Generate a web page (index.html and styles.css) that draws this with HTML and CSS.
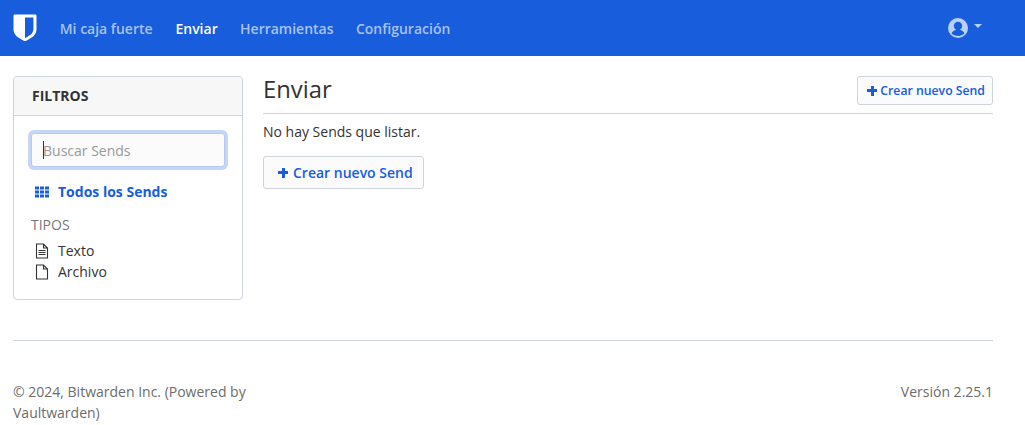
FILE: index.html
```html
<!DOCTYPE html>
<html lang="es">
<head>
    <meta charset="UTF-8">
    <title>Bitwarden Web Vault</title>
    <link rel="stylesheet" href="styles.css">
</head>
<body>

    <nav class="navbar">
        <svg class="logo" viewBox="0 0 24 28" aria-hidden="true">
            <path fill="#fff" d="M23.2 0.9C23 0.7 22.7 0.5 22.4 0.5H1.6C1.3 0.5 1 0.7 0.8 0.9 0.6 1.1 0.5 1.4 0.5 1.7V15.4C0.5 16.5 0.7 17.5 1.1 18.5 1.5 19.5 2.1 20.4 2.8 21.2 3.4 22 4.2 22.7 5 23.3 5.8 23.9 6.6 24.4 7.4 24.8 8.2 25.3 8.9 25.7 9.5 26 10.1 26.3 10.5 26.5 10.9 26.7L11.5 26.9C11.7 27 11.9 27 12 27 12.1 27 12.3 27 12.5 26.9L13.1 26.7C13.5 26.5 13.9 26.3 14.5 26 15.1 25.7 15.8 25.3 16.6 24.8 17.4 24.4 18.2 23.9 19 23.3 19.8 22.7 20.6 22 21.2 21.2 21.9 20.4 22.5 19.5 22.9 18.5 23.3 17.5 23.5 16.5 23.5 15.4V1.7C23.5 1.4 23.4 1.1 23.2 0.9Z"/>
            <path fill="#175ddc" d="M20.4 3.5V15.3C20.4 16.2 20.2 17 19.8 17.8 19.4 18.6 18.9 19.3 18.3 19.9 17.7 20.5 17 21.1 16.2 21.6 15.5 22.1 14.8 22.5 14.2 22.9 13.5 23.2 12.9 23.5 12.4 23.7L12 23.9V3.5Z"/>
        </svg>
        <a class="nav-link" href="#">Mi caja fuerte</a>
        <a class="nav-link active" href="#">Enviar</a>
        <a class="nav-link" href="#">Herramientas</a>
        <a class="nav-link" href="#">Configuración</a>
        <a class="account" href="#">
            <svg class="avatar" viewBox="0 0 20 20" aria-hidden="true">
                <circle cx="10" cy="10" r="10" fill="#bcd0f3"/>
                <circle cx="10" cy="8" r="4.2" fill="#175ddc"/>
                <path fill="#175ddc" d="M3.6 15.6C4.4 13.2 6.4 12 8 12h4c1.6 0 3.6 1.2 4.4 3.6C14.8 17.2 12.6 18 10 18S5.2 17.2 3.6 15.6Z"/>
            </svg>
            <span class="caret"></span>
        </a>
    </nav>

    <div class="container">
        <div class="content">
            <aside class="card">
                <div class="card-header">FILTROS</div>
                <div class="card-body">
                    <div class="search">
                        <input class="search-input" type="text" placeholder="Buscar Sends">
                        <span class="text-caret"></span>
                    </div>
                    <a class="filter filter-all" href="#">
                        <svg class="filter-icon" viewBox="0 0 14 12" aria-hidden="true">
                            <path fill="#175ddc" d="M0 0.5h4v3H0zM5 0.5h4v3H5zM10 0.5h4v3h-4zM0 4.5h4v3H0zM5 4.5h4v3H5zM10 4.5h4v3h-4zM0 8.5h4v3H0zM5 8.5h4v3H5zM10 8.5h4v3h-4z"/>
                        </svg>
                        Todos los Sends
                    </a>
                    <h3 class="filter-title">TIPOS</h3>
                    <ul class="filter-list">
                        <li>
                            <a class="filter" href="#">
                                <svg class="filter-icon" viewBox="0 0 14 16" aria-hidden="true">
                                    <path fill="none" stroke="#333" stroke-width="1.1" d="M1.5 1h7l4 4v10h-11zM8.5 1v4h4"/>
                                    <path fill="none" stroke="#333" d="M3.5 7.5h7M3.5 9.5h7M3.5 11.5h7"/>
                                </svg>
                                Texto
                            </a>
                        </li>
                        <li>
                            <a class="filter" href="#">
                                <svg class="filter-icon" viewBox="0 0 14 16" aria-hidden="true">
                                    <path fill="none" stroke="#333" stroke-width="1.1" d="M1.5 1h7l4 4v10h-11zM8.5 1v4h4"/>
                                </svg>
                                Archivo
                            </a>
                        </li>
                    </ul>
                </div>
            </aside>

            <main class="main">
                <div class="page-header">
                    <h1>Enviar</h1>
                    <button class="btn btn-sm"><span class="plus"></span>Crear nuevo Send</button>
                </div>
                <p class="empty">No hay Sends que listar.</p>
                <button class="btn"><span class="plus"></span>Crear nuevo Send</button>
            </main>
        </div>

        <footer class="footer">
            <div class="copyright">© 2024, Bitwarden Inc. (Powered by Vaultwarden)</div>
            <div class="version">Versión 2.25.1</div>
        </footer>
    </div>

</body>
</html>
```

FILE: styles.css
```css
body {
    margin: 0;
    background: #fff;
    color: #333;
    font-family: "Open Sans", sans-serif;
    font-size: 14px;
    line-height: 21px;
}
a {
    text-decoration: none;
}
.navbar {
    display: flex;
    align-items: center;
    height: 56px;
    padding: 0 43px 0 13px;
    background: #175ddc;
    box-sizing: border-box;
}
.logo {
    width: 24px;
    height: 28px;
    margin-right: 11.5px;
}
.nav-link {
    padding: 0 11.2px;
    color: rgba(255, 255, 255, 0.64);
    font-weight: 600;
}
.nav-link:first-of-type {
    padding-right: 11.7px;
}
.nav-link.active {
    color: #fff;
}
.account {
    display: flex;
    align-items: center;
    margin-left: auto;
}
.avatar {
    width: 20px;
    height: 20px;
}
.caret {
    width: 0;
    height: 0;
    margin-left: 6px;
    margin-bottom: 4px;
    border-top: 4px solid #bcd0f3;
    border-left: 4px solid transparent;
    border-right: 4px solid transparent;
}
.container {
    padding: 20px 32px 0 13px;
}
.content {
    display: flex;
    gap: 20px;
}
.card {
    flex: 0 0 230px;
    height: 224px;
    box-sizing: border-box;
    border: 1px solid #ced4da;
    border-radius: 4px;
}
.card-header {
    padding: 8px 18px 9px;
    background: #f7f7f7;
    border-bottom: 1px solid #ced4da;
    font-weight: 700;
    border-radius: 3px 3px 0 0;
}
.card-body {
    padding: 17px 17px 0;
}
.search {
    position: relative;
    margin-bottom: 14px;
}
.search-input {
    display: block;
    width: 100%;
    height: 34px;
    box-sizing: border-box;
    padding: 6px 11px;
    background: #fbfbfb;
    border: 1px solid #b4c9f1;
    border-radius: 3px;
    box-shadow: 0 0 0 3px rgba(23, 93, 220, 0.25);
    outline: none;
    color: #465057;
    font-family: inherit;
    font-size: 14px;
}
.search-input::placeholder {
    color: #999;
}
.text-caret {
    position: absolute;
    left: 12px;
    top: 8px;
    width: 1px;
    height: 18px;
    background: #333;
}
.filter {
    display: flex;
    align-items: center;
    color: #333;
}
.filter-all {
    color: #175ddc;
    font-weight: 700;
}
.filter-icon {
    width: 14px;
    height: 16px;
    margin: 0 9px 0 4px;
}
.filter-title {
    margin: 12px 0 5px;
    color: #777;
    font-size: 14px;
    font-weight: 400;
}
.filter-list {
    margin: 0;
    padding: 0;
    list-style: none;
}
.main {
    flex: 1;
}
.page-header {
    display: flex;
    justify-content: space-between;
    align-items: flex-start;
    height: 37px;
    border-bottom: 1px solid #ced4da;
}
h1 {
    margin: 0;
    font-size: 23.8px;
    font-weight: 400;
    line-height: 27px;
}
.empty {
    margin: 7px 0 14px;
}
.btn {
    display: inline-flex;
    align-items: center;
    height: 33px;
    padding: 0 10px 0 14px;
    background: #fbfbfb;
    border: 1px solid #ced4da;
    border-radius: 3px;
    color: #175ddc;
    font-family: inherit;
    font-size: 14px;
    font-weight: 600;
}
.btn-sm {
    height: 29px;
    padding: 0 7px 0 9px;
    font-size: 12.25px;
}
.plus {
    width: 10px;
    height: 10px;
    margin-right: 5px;
    background:
        linear-gradient(#175ddc, #175ddc) center / 100% 3px no-repeat,
        linear-gradient(#175ddc, #175ddc) center / 3px 100% no-repeat;
}
.btn-sm .plus {
    margin-right: 3px;
}
.footer {
    display: flex;
    justify-content: space-between;
    align-items: flex-start;
    margin-top: 40px;
    padding-top: 40px;
    border-top: 1px solid #ced4da;
    color: #6c6c6c;
}
.copyright {
    width: 245px;
}
```
